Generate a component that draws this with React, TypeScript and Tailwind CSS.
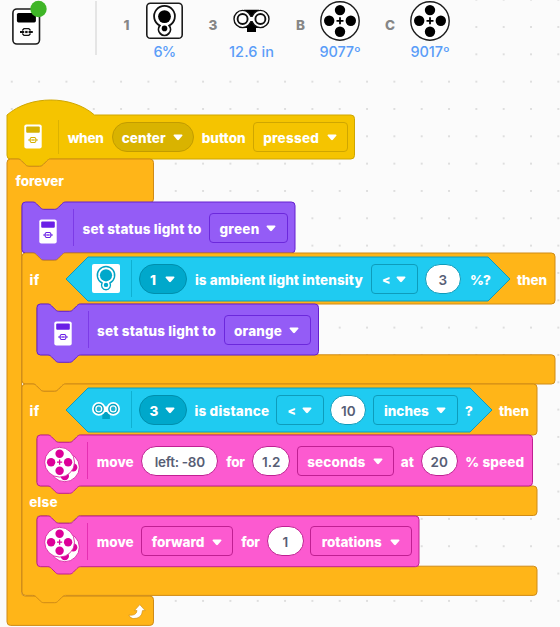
import { useLayoutEffect, useRef } from "react";
import type { ReactNode } from "react";

/* ---------- block outlines ---------- */

const R = 3.6;
const INDENT = 14.6;
const NOTCH_R =
  "c1.8 0 2.7 .9 3.6 1.8 l3.7 3.7 c.9 .9 1.8 1.8 3.6 1.8 h10.9 c1.8 0 2.7 -.9 3.6 -1.8 l3.7 -3.7 c.9 -.9 1.8 -1.8 3.6 -1.8";
const NOTCH_L =
  "c-1.8 0 -2.7 .9 -3.6 1.8 l-3.7 3.7 c-.9 .9 -1.8 1.8 -3.6 1.8 h-10.9 c-1.8 0 -2.7 -.9 -3.6 -1.8 l-3.7 -3.7 c-.9 -.9 -1.8 -1.8 -3.6 -1.8";
const TOP = `M0 ${R} a${R} ${R} 0 0 1 ${R} ${-R} H10.9 ${NOTCH_R}`;

function armEnd(w: number, bottom: number) {
  return `H${w - R} a${R} ${R} 0 0 1 ${R} ${R} V${bottom - R} a${R} ${R} 0 0 1 ${-R} ${R}`;
}

function closeBottom(tab: boolean) {
  return `${tab ? `H43.6 ${NOTCH_L}` : ""} H${R} a${R} ${R} 0 0 1 ${-R} ${-R} Z`;
}

function stackPath(w: number, h: number) {
  return `${TOP} ${armEnd(w, h)} ${closeBottom(true)}`;
}

function hatPath(w: number, h: number) {
  return `M0 0 c22.8 -20 64.7 -20 87.5 0 ${armEnd(w, h)} ${closeBottom(true)}`;
}

/* parts alternates arm height, mouth height, arm height, ... */
function cPath(w: number, parts: number[], tab: boolean) {
  let y = 0;
  let d = TOP;
  parts.forEach((p, i) => {
    if (i % 2 === 0) {
      d += ` ${armEnd(w, y + p)}`;
    } else {
      d += ` H${INDENT + 43.6} ${NOTCH_L} H${INDENT + R} a${R} ${R} 0 0 0 ${-R} ${R} V${y + p - R} a${R} ${R} 0 0 0 ${R} ${R}`;
    }
    y += p;
  });
  return `${d} ${closeBottom(tab)}`;
}

function Outline({ d, className }: { d: string; className: string }) {
  return (
    <svg className="pointer-events-none absolute left-0 top-0 h-px w-px overflow-visible">
      <path d={d} className={className} strokeWidth="1" />
    </svg>
  );
}

const YELLOW = "fill-[#f5c400] stroke-[#cfa600]";
const ORANGE = "fill-[#ffb518] stroke-[#cf8b17]";
const PURPLE = "fill-[#945cf6] stroke-[#6420cf]";
const CYAN = "fill-[#1fcbf1] stroke-[#0e9cbb]";
const PINK = "fill-[#fc5ad0] stroke-[#c01f92]";

/* ---------- text and fields ---------- */

/* Tracks its text so that the word fills the width given by className. */
function T({ children, className }: { children: string; className: string }) {
  const outer = useRef<HTMLSpanElement>(null);
  const inner = useRef<HTMLSpanElement>(null);
  useLayoutEffect(() => {
    const o = outer.current;
    const i = inner.current;
    if (!o || !i) return;
    i.style.letterSpacing = "0px";
    const want = o.getBoundingClientRect().width;
    const have = i.getBoundingClientRect().width;
    i.style.letterSpacing = `${(want - have) / children.length}px`;
  }, [children]);
  return (
    <span ref={outer} className={`block shrink-0 whitespace-nowrap ${className}`}>
      <span ref={inner}>{children}</span>
    </span>
  );
}

function Arrow({ className }: { className: string }) {
  return (
    <svg viewBox="0 0 10 7" className={`mt-[2px] h-[7px] w-[10px] shrink-0 fill-white ${className}`}>
      <path d="M1.3 .4H8.7Q10 .6 9.3 1.8L5.9 5.7Q5 6.6 4.1 5.7L.7 1.8Q0 .6 1.3 .4Z" />
    </svg>
  );
}

function Menu({ children, className }: { children: ReactNode; className: string }) {
  return (
    <span className={`flex h-[30px] shrink-0 items-center border ${className}`}>{children}</span>
  );
}

function Value({ children, className }: { children: ReactNode; className: string }) {
  return (
    <span
      className={`flex h-[29.5px] shrink-0 items-center justify-center rounded-full border bg-white pt-[2px] font-semibold text-[#575e75] ${className}`}
    >
      {children}
    </span>
  );
}

function Sep({ className }: { className: string }) {
  return <span className={`w-px shrink-0 ${className}`} />;
}

/* ---------- icons ---------- */

function Brick({ ink, className }: { ink: string; className: string }) {
  return (
    <svg viewBox="0 0 18 25" className={`h-[25px] w-[18px] shrink-0 ${className}`}>
      <rect x=".3" y=".5" width="17.4" height="24" rx="2" fill="#fff" />
      <rect x="2.2" y="2.4" width="13.6" height="6.4" rx="1" fill={ink} />
      <g fill="none" stroke={ink}>
        <path d="M4.4 16H7.6M10.4 16H13.6" strokeWidth="1.5" />
        <path d="M5.9 14.9L7.2 13.5H10.8L12.1 14.9M5.9 17.1L7.2 18.5H10.8L12.1 17.1" strokeWidth="1.1" />
      </g>
      <rect x="8.2" y="15.2" width="1.6" height="1.6" fill={ink} />
    </svg>
  );
}

function LightSensor() {
  return (
    <svg viewBox="0 0 28 29" className="ml-[26px] h-[29px] w-[28px] shrink-0">
      <rect width="28" height="29" rx="2" fill="#fff" />
      <path
        d="M10.1 19A8.7 8.7 0 1 1 17.9 19A4.5 4.5 0 1 1 10.1 19Z"
        fill="#fff"
        stroke="#00a3c4"
        strokeWidth="1.4"
      />
      <circle cx="14" cy="11.3" r="6.1" fill="#00a8cb" />
      <circle cx="14" cy="20.9" r="2.2" fill="#00a8cb" />
    </svg>
  );
}

function DistanceSensor() {
  return (
    <svg viewBox="0 0 28 18" className="ml-[26px] mt-[2px] h-[18px] w-[28px] shrink-0">
      <rect x="10.3" y="9" width="7.6" height="8" fill="#00a3c4" />
      <path d="M8 4.4H20V10H8Z" fill="#fff" />
      <circle cx="6.8" cy="6.9" r="6.8" fill="#fff" />
      <circle cx="21.2" cy="6.9" r="6.8" fill="#fff" />
      <g fill="#fff" stroke="#00a3c4" strokeWidth="1.5">
        <circle cx="6.8" cy="6.9" r="4.3" />
        <circle cx="21.2" cy="6.9" r="4.3" />
      </g>
      <g fill="#1fb5d3">
        <circle cx="6.8" cy="6.9" r="2.3" />
        <circle cx="21.2" cy="6.9" r="2.3" />
      </g>
    </svg>
  );
}

function DriveMotors() {
  return (
    <svg viewBox="0 -5.6 37 42" className="ml-[7.7px] mt-[2px] h-[42px] w-[37px] shrink-0">
      <circle cx="20.8" cy="20.6" r="14.5" fill="#fff" stroke="#d5149c" strokeWidth=".8" />
      <circle cx="29.2" cy="20.8" r="4.2" fill="#dd0099" />
      <circle cx="20.8" cy="29.4" r="4.2" fill="#dd0099" />
      <circle cx="15.6" cy="15.6" r="14.9" fill="#fff" stroke="#d5149c" strokeWidth=".8" />
      <g fill="#dd0099">
        <circle cx="15.6" cy="7.1" r="4.2" />
        <circle cx="15.6" cy="24.1" r="4.2" />
        <circle cx="7.1" cy="15.6" r="4.2" />
        <circle cx="24.1" cy="15.6" r="4.2" />
      </g>
      <path d="M15.6 13V18.2M13 15.6H18.2" stroke="#dd0099" strokeWidth="1.3" />
    </svg>
  );
}

function HubStatus() {
  return (
    <svg viewBox="0 0 36 46" className="ml-[12px] h-[46px] w-[36px] shrink-0">
      <rect x=".9" y="9" width="26.6" height="35" rx="4" fill="#fff" stroke="#1c1c1c" strokeWidth="1.6" />
      <rect x="4.9" y="13" width="19" height="9.4" rx="1.6" fill="#000" />
      <g fill="none" stroke="#111">
        <path d="M8 32H12.2M16.6 32H20.8" strokeWidth="2" />
        <path d="M10.3 30.4L12 28.6H16.8L18.5 30.4M10.3 33.6L12 35.4H16.8L18.5 33.6" strokeWidth="1.4" />
      </g>
      <rect x="13.2" y="30.9" width="2.4" height="2.2" fill="#111" />
      <circle cx="26.5" cy="9" r="8.2" fill="#3fb527" />
    </svg>
  );
}

function LightPort() {
  return (
    <svg viewBox="0 0 37 42" className="h-[42px] w-[37px]">
      <rect x=".8" y="3.3" width="35.4" height="35" rx="3.6" fill="#fff" stroke="#1c1c1c" strokeWidth="1.6" />
      <path
        d="M13.8 25.6A10.4 10.4 0 1 1 23.2 25.6A6 6 0 1 1 13.8 25.6Z"
        fill="#fff"
        stroke="#111"
        strokeWidth="1.8"
      />
      <circle cx="18.5" cy="16.6" r="6.4" fill="#000" />
      <circle cx="18.5" cy="28.4" r="2.8" fill="#000" />
    </svg>
  );
}

function DistancePort() {
  return (
    <svg viewBox="0 0 37 42" className="h-[42px] w-[37px]">
      <path d="M11 9.8H26V28H23V32H14V28H11Z" fill="#000" />
      <g fill="#fff" stroke="#111" strokeWidth="1.4">
        <circle cx="9.6" cy="19" r="8.6" />
        <circle cx="27.4" cy="19" r="8.6" />
      </g>
      <path d="M14.5 16.2Q18.5 17.6 22.5 16.2V21.8Q18.5 20.4 14.5 21.8Z" fill="#fff" />
      <g fill="#fff" stroke="#111" strokeWidth="1.9">
        <circle cx="9.6" cy="19" r="5" />
        <circle cx="27.4" cy="19" r="5" />
      </g>
    </svg>
  );
}

function MotorPort() {
  return (
    <svg viewBox="0 0 42 42" className="h-[42px] w-[42px]">
      <circle cx="21" cy="21" r="19.2" fill="#fff" stroke="#1c1c1c" strokeWidth="1.4" />
      <circle cx="21" cy="10.1" r="5.2" />
      <circle cx="21" cy="31.7" r="5.2" />
      <circle cx="10.2" cy="20.8" r="5.2" />
      <circle cx="31.8" cy="20.8" r="5.2" />
      <path d="M21 17.3V24.3M17.5 20.8H24.5" stroke="#000" strokeWidth="1.8" />
    </svg>
  );
}

function LoopArrow() {
  return (
    <svg viewBox="0 0 18 16" className="h-[16px] w-[18px]">
      <path
        d="M.8 11Q8.2 12.2 9 6.6H6.4L11.8 .6L17.2 6.6H14.5Q14 14.8 5 14.6Q1.8 14 .8 11Z"
        fill="#fff"
        stroke="#d4941a"
        strokeWidth=".7"
        strokeLinejoin="round"
      />
    </svg>
  );
}

function Port({ name, icon, reading, className, nameClass, readingClass }: {
  name: string;
  icon: ReactNode;
  reading: string;
  className: string;
  nameClass: string;
  readingClass: string;
}) {
  return (
    <div className={`flex shrink-0 ${className}`}>
      <T className={`mt-[17px] h-4 text-[13.5px] font-extrabold leading-4 text-[#868686] ${nameClass}`}>{name}</T>
      <div className="flex w-[50px] flex-col items-center">
        {icon}
        <T className={`text-[14.5px] font-medium leading-[20px] text-[#5a9df8] ${readingClass}`}>{reading}</T>
      </div>
    </div>
  );
}

/* ---------- page ---------- */

export default function App() {
  return (
    <div className="h-[627px] w-[560px] overflow-hidden bg-[#fbfbfb] bg-[radial-gradient(circle_at_center,#dedede_0.9px,transparent_1.4px)] bg-[length:27.33px_27.33px] bg-[position:-1.9px_-14px] font-['Inter','Liberation_Sans',sans-serif] text-[13.5px] font-extrabold leading-[18px] text-white">
      <header className="flex h-[68px] w-[463px] items-start bg-[#fbfbfb]">
        <HubStatus />
        <div className="ml-[47px] mt-px h-[54px] w-[2px] shrink-0 bg-[#e5e5e5]" />
        <Port name="1" icon={<LightPort />} reading="6%" className="ml-[26.5px]" nameClass="w-[6px] mr-[10px]" readingClass="w-[22px]" />
        <Port name="3" icon={<DistancePort />} reading="12.6 in" className="ml-[19px]" nameClass="w-[10px] mr-[8px]" readingClass="w-[45px]" />
        <Port name="B" icon={<MotorPort />} reading="9077º" className="ml-[19.5px]" nameClass="w-[10.5px] mr-[8.5px]" readingClass="w-[41px]" />
        <Port name="C" icon={<MotorPort />} reading="9017º" className="ml-[20px]" nameClass="w-[11px] mr-[9px]" readingClass="w-[39px]" />
      </header>

      <main className="flex flex-col items-start pl-[7.2px] pt-[46.6px]">
        {/* when [center] button [pressed] */}
        <div className="relative flex h-[44px] w-[347.5px] items-center">
          <Outline d={hatPath(347.5, 44)} className={YELLOW} />
          <Brick ink="#d6b100" className="relative ml-[17px]" />
          <Sep className="relative ml-[16px] h-[34px] bg-[#dcb200]" />
          <T className="relative ml-[8.5px] mt-[3px] w-[36px]">when</T>
          <Menu className="relative ml-[8px] w-[82px] rounded-full border-[#c29c00] bg-[#d9b300] pl-[9px]">
            <T className="mt-[3px] w-[44px]">center</T>
            <Arrow className="ml-[7px]" />
          </Menu>
          <T className="relative ml-[8px] mt-[3px] w-[44px]">button</T>
          <Menu className="relative ml-[7.5px] w-[95px] rounded-[4px] border-[#cfa600] pl-[9px]">
            <T className="mt-[3px] w-[56px]">pressed</T>
            <Arrow className="ml-[7.5px]" />
          </Menu>
        </div>

        {/* forever */}
        <div className="relative flex h-[466.4px] flex-col items-start">
          <Outline d={cPath(146.5, [43.7, 393.4, 29.3], false)} className={ORANGE} />
          <div className="relative flex h-[43.7px] items-center">
            <T className="ml-[8.3px] mt-[2px] w-[48.5px]">forever</T>
          </div>

          <div className="relative ml-[14.8px] flex flex-col items-start">
            <div className="relative flex h-[51px] w-[273px] items-center">
              <Outline d={stackPath(273, 51)} className={PURPLE} />
              <Brick ink="#6a1fe6" className="relative ml-[17px] mt-[8px]" />
              <Sep className="relative ml-[16px] h-[37px] bg-[#7c3be6]" />
              <T className="relative ml-[8.5px] mt-[2px] w-[119px]">set status light to</T>
              <Menu className="relative ml-[7.5px] w-[79px] rounded-[4px] border-[#6c28dc] pl-[9.5px]">
                <T className="mt-[2px] w-[40px]">green</T>
                <Arrow className="ml-[7px]" />
              </Menu>
            </div>

            {/* if ambient light */}
            <div className="relative h-[131px]">
              <Outline d={cPath(533, [51, 50.8, 29.2], true)} className={ORANGE} />
              <div className="relative flex h-[51px] w-[533px] items-center">
                <T className="ml-[7.5px] mt-[2px] w-[10px]">if</T>
                <div className="relative ml-[26.4px] flex h-[44px] w-[444px] items-center">
                  <Outline d="M22 0H422L444 22L422 44H22L0 22Z" className={CYAN} />
                  <div className="relative flex items-center">
                    <LightSensor />
                    <Sep className="ml-[11px] h-[37px] bg-[#0fb0d2]" />
                    <Menu className="ml-[7.5px] w-[47.5px] rounded-full border-[#008fad] bg-[#00a8cb] pl-[9.5px]">
                      <T className="mt-[2px] w-[7px]">1</T>
                      <Arrow className="ml-[8.5px]" />
                    </Menu>
                    <T className="ml-[8px] mt-[2px] w-[168px]">is ambient light intensity</T>
                    <Menu className="ml-[8px] w-[47.5px] rounded-[4px] border-[#0e9cbb] pl-[10px]">
                      <T className="mt-[2px] w-[8.5px] text-[12px] font-black">{"<"}</T>
                      <Arrow className="ml-[6px]" />
                    </Menu>
                    <Value className="ml-[6.5px] w-[36px] border-[#0e9cbb]">3</Value>
                    <T className="ml-[9px] mt-[2px] w-[20px]">%?</T>
                  </div>
                </div>
                <T className="ml-[7px] mt-[2px] w-[30px]">then</T>
              </div>
              <div className="relative ml-[14.6px] flex h-[51px] w-[281.5px] items-center">
                <Outline d={stackPath(281.5, 51)} className={PURPLE} />
                <Brick ink="#6a1fe6" className="relative ml-[17px] mt-[8px]" />
                <Sep className="relative ml-[16px] h-[37px] bg-[#7c3be6]" />
                <T className="relative ml-[8.5px] mt-[2px] w-[119px]">set status light to</T>
                <Menu className="relative ml-[7.5px] w-[87px] rounded-[4px] border-[#6c28dc] pl-[9.5px]">
                  <T className="mt-[2px] w-[48px]">orange</T>
                  <Arrow className="ml-[7px]" />
                </Menu>
              </div>
            </div>

            {/* if distance / else */}
            <div className="relative h-[211.4px]">
              <Outline d={cPath(515, [51, 51, 29.5, 50.7, 29.2], true)} className={ORANGE} />
              <div className="relative flex h-[51px] w-[515px] items-center">
                <T className="ml-[7.5px] mt-[2px] w-[10px]">if</T>
                <div className="relative ml-[26.4px] flex h-[44px] w-[426px] items-center">
                  <Outline d="M22 0H404L426 22L404 44H22L0 22Z" className={CYAN} />
                  <div className="relative flex items-center">
                    <DistanceSensor />
                    <Sep className="ml-[11px] h-[37px] bg-[#0fb0d2]" />
                    <Menu className="ml-[7.5px] w-[47.5px] rounded-full border-[#008fad] bg-[#00a8cb] pl-[9px]">
                      <T className="mt-[2px] w-[9px]">3</T>
                      <Arrow className="ml-[7px]" />
                    </Menu>
                    <T className="ml-[7.5px] mt-[2px] w-[75px]">is distance</T>
                    <Menu className="ml-[7px] w-[47.5px] rounded-[4px] border-[#0e9cbb] pl-[10px]">
                      <T className="mt-[2px] w-[8.5px] text-[12px] font-black">{"<"}</T>
                      <Arrow className="ml-[6px]" />
                    </Menu>
                    <Value className="ml-[6.5px] w-[36px] border-[#0e9cbb]">10</Value>
                    <Menu className="ml-[7px] w-[84.5px] rounded-[4px] border-[#0e9cbb] pl-[9.5px]">
                      <T className="mt-[2px] w-[45px]">inches</T>
                      <Arrow className="ml-[7.5px]" />
                    </Menu>
                    <T className="ml-[7px] mt-[2px] w-[8px]">?</T>
                  </div>
                </div>
                <T className="ml-[7px] mt-[2px] w-[30px]">then</T>
              </div>

              <div className="relative ml-[14.6px] flex h-[51px] w-[495.5px] items-center">
                <Outline d={stackPath(495.5, 51)} className={PINK} />
                <div className="relative flex items-center">
                  <DriveMotors />
                  <Sep className="ml-[6px] h-[37px] bg-[#e52fb2]" />
                  <T className="ml-[8.5px] mt-[2px] w-[37px]">move</T>
                  <Value className="ml-[7.5px] w-[77px] border-[#c01f92]">
                    <T className="w-[50px]">left: -80</T>
                  </Value>
                  <T className="ml-[8px] mt-[2px] w-[18.5px]">for</T>
                  <Value className="ml-[7.5px] w-[38px] border-[#c01f92]">1.2</Value>
                  <Menu className="ml-[6.5px] w-[97.5px] rounded-[4px] border-[#c01f92] pl-[9.5px]">
                    <T className="mt-[2px] w-[58px]">seconds</T>
                    <Arrow className="ml-[7.5px]" />
                  </Menu>
                  <T className="ml-[6.5px] mt-[2px] w-[13px]">at</T>
                  <Value className="ml-[7px] w-[37px] border-[#c01f92]">20</Value>
                  <T className="ml-[7.5px] mt-[2px] w-[59px]">% speed</T>
                </div>
              </div>

              <div className="relative flex h-[29.5px] items-center">
                <T className="ml-[7.3px] mt-[2px] w-[28.5px]">else</T>
              </div>

              <div className="relative ml-[14.6px] flex h-[50.7px] w-[382px] items-center">
                <Outline d={stackPath(382, 50.7)} className={PINK} />
                <div className="relative flex items-center">
                  <DriveMotors />
                  <Sep className="ml-[6px] h-[37px] bg-[#e52fb2]" />
                  <T className="ml-[8.5px] mt-[2px] w-[37px]">move</T>
                  <Menu className="ml-[7.5px] w-[92px] rounded-[4px] border-[#c01f92] pl-[9.5px]">
                    <T className="mt-[2px] w-[52.5px]">forward</T>
                    <Arrow className="ml-[7.5px]" />
                  </Menu>
                  <T className="ml-[8px] mt-[2px] w-[18.5px]">for</T>
                  <Value className="ml-[7px] w-[37px] border-[#c01f92]">1</Value>
                  <Menu className="ml-[6.5px] w-[101.5px] rounded-[4px] border-[#c01f92] pl-[10.5px]">
                    <T className="mt-[2px] w-[60px]">rotations</T>
                    <Arrow className="ml-[8px]" />
                  </Menu>
                </div>
              </div>
            </div>
          </div>

          <div className="relative flex w-[146.5px] justify-end pr-[8px] pt-[8px]">
            <LoopArrow />
          </div>
        </div>
      </main>
    </div>
  );
}
